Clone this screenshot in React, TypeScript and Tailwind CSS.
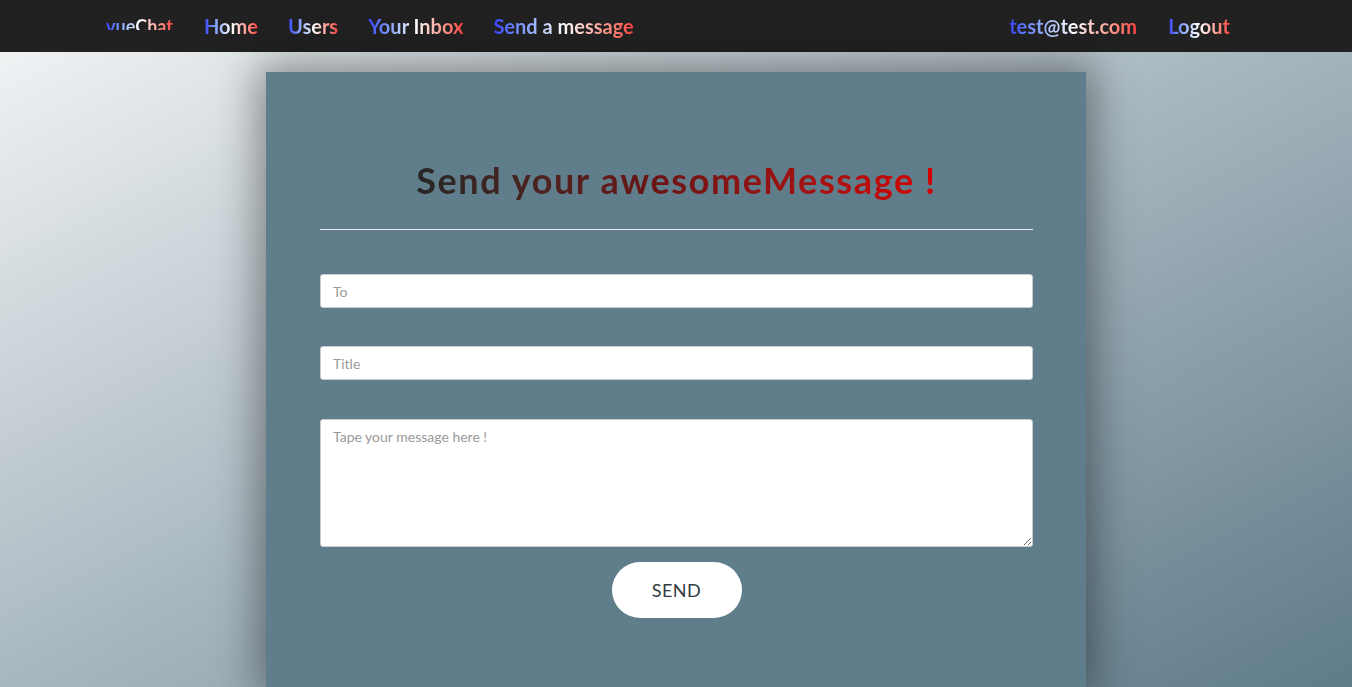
import React from "react";

const grad = "bg-linear-to-r from-[#3c3cff] via-white to-[#ff3c3c] bg-clip-text text-transparent";

export default function App() {
  return (
    <div className="h-screen overflow-hidden flex flex-col bg-linear-to-br from-[#f6f7f8] to-[#5f7b89] font-['Lato',sans-serif]">
      <nav className="h-[52px] shrink-0 bg-[#212121] flex items-center justify-between pl-[106px] pr-[122px]">
        <div className="flex items-center">
          <div className="h-[17px] overflow-hidden mt-[-9px] mr-[31px]">
            <span className={`${grad} text-[18px] font-bold leading-[26px] block`}>vueChat</span>
          </div>
          <div className="flex items-center gap-[30px] text-[20px] font-bold">
            <a className={grad}>Home</a>
            <a className={grad}>Users</a>
            <a className={grad}>Your Inbox</a>
            <a className={grad}>Send a message</a>
          </div>
        </div>
        <div className="flex items-center gap-[31px] text-[20px] font-bold">
          <span className={grad}>test@test.com</span>
          <a className={grad}>Logout</a>
        </div>
      </nav>
      <div className="flex-1 flex justify-center pt-[20px]">
        <div className="w-[820px] bg-[#607d8b] shadow-[0_0_40px_8px_rgba(0,0,0,0.4)] pl-[54px] pr-[53px] pt-[78px]">
          <h1 className="text-center text-[36px] font-bold tracking-[1.6px] leading-[60px]">
            <span className="bg-linear-to-r from-[#262626] via-[#6a1414] via-45% to-[#d50000] bg-clip-text text-transparent">Send your awesomeMessage !</span>
          </h1>
          <div className="h-px bg-[#e8ecee] mt-[19px]" />
          <input
            className="mt-[44px] block w-full h-[34px] bg-white border border-[#cccccc] rounded-[3px] px-[12px] text-[14px] outline-none placeholder:text-[#9a9a9a]"
            placeholder="To"
          />
          <input
            className="mt-[38px] block w-full h-[34px] bg-white border border-[#cccccc] rounded-[3px] px-[12px] text-[14px] outline-none placeholder:text-[#9a9a9a]"
            placeholder="Title"
          />
          <textarea
            className="mt-[39px] block w-full h-[128px] bg-white border border-[#cccccc] rounded-[3px] px-[12px] pt-[6px] pb-[6px] text-[14px] outline-none placeholder:text-[#9a9a9a]"
            placeholder="Tape your message here !"
          />
          <div className="flex justify-center mt-[15px]">
            <button className="w-[130px] h-[56px] rounded-full bg-white text-[18px] text-[#333b44] tracking-[0.5px]">
              SEND
            </button>
          </div>
        </div>
      </div>
    </div>
  );
}
